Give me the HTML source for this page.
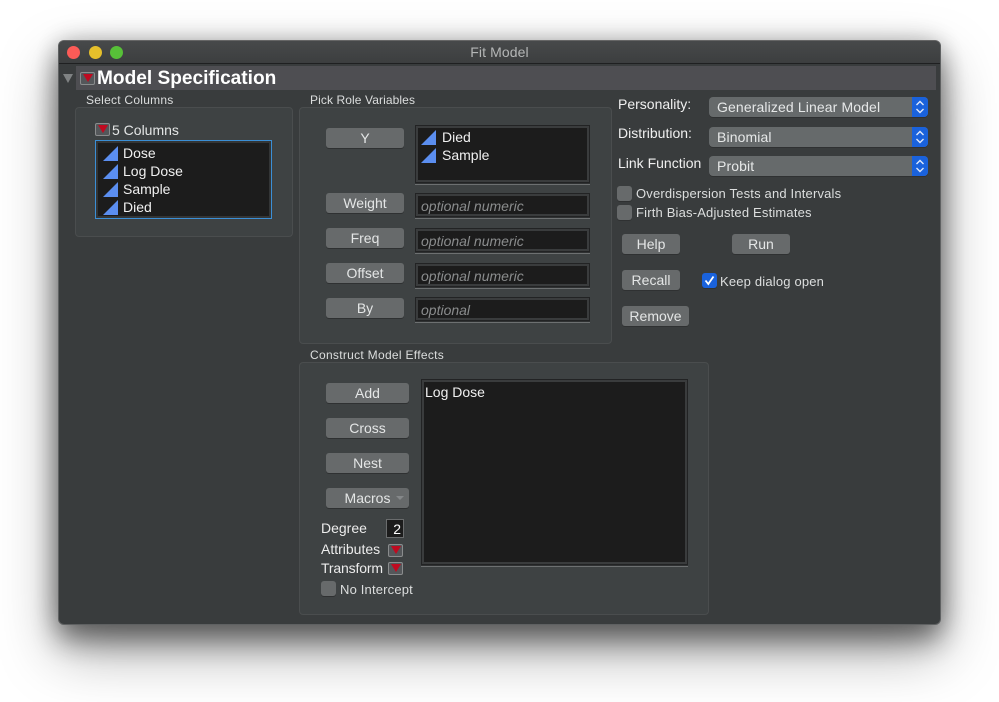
<!DOCTYPE html>
<html><head><meta charset="utf-8"><style>
*{box-sizing:border-box}
html,body{margin:0;padding:0;background:#fff}
body{width:999px;height:702px;position:relative;overflow:hidden;font-family:"Liberation Sans",sans-serif;color:#e4e6e6;font-size:14px}
#page{position:absolute;left:0;top:0;width:999px;height:702px;filter:blur(.3px)}
.a,.t,.btn,.well,.panel,.pop,.cb,.tri,.menu{position:absolute}
.t{white-space:nowrap;line-height:16px}
#win{left:58px;top:40px;width:883px;height:585px;background:#393c3d;border-radius:6px;box-shadow:0 16px 28px rgba(0,0,0,.42),0 26px 58px rgba(0,0,0,.36),0 0 26px rgba(0,0,0,.22);border:1px solid #5f6162;border-top-color:#666}
#bar{left:59px;top:41px;width:881px;height:23px;background:linear-gradient(#47494a,#3c3e3f);border-bottom:1px solid #1f2021;border-radius:5px 5px 0 0}
.dot{position:absolute;width:13px;height:13px;border-radius:50%;top:46px}
.panel{background:#3e4243;border:1px solid #4a4d4e;border-radius:4px}
.btn{background:#676a6b;border-radius:3px;height:20px;text-align:center;line-height:20px;color:#e4e6e6;box-shadow:0 1px 0 #2f3132;font-size:14px}
.well{background:#1c1c1c;border:1px solid #222324;box-shadow:inset 0 0 0 2px #3a3c3d,0 1px 0 #2f3132,0 2px 0 #6d7071}
.ph{font-style:italic;color:#8a8c8d;font-size:14px}
.pop{background:#666a6b;border-radius:4px;height:20px;width:219px;left:709px;color:#e6e8e8;padding-left:8px;line-height:21px;box-shadow:0 1px 0 #2f3132;font-size:14px;letter-spacing:.12px}
.pop i{position:absolute;right:0;top:0;width:16px;height:20px;background:#1a62dc;border-radius:0 4px 4px 0}
.pop svg{position:absolute;left:3px;top:3px}
.cb{width:15px;height:15px;background:#676a6b;border-radius:3px;box-shadow:0 1px 0 #2f3132}
.menu{width:15px;height:13px;background:#54575a;border:1px solid #8a8c8d;border-radius:2px}
.menu:after{content:"";position:absolute;left:1.5px;top:1px;border-left:5px solid transparent;border-right:5px solid transparent;border-top:8px solid #c00a20}
.tri{width:17px;height:17px}
.h{font-size:12px;color:#dcdede}
.c{font-size:13px;letter-spacing:.18px;color:#dcdede}
</style></head><body><div id="page">
<div class="a" id="win"></div>
<div class="a" id="bar"></div>
<div class="dot" style="left:67px;background:#fc5b57"></div>
<div class="dot" style="left:89px;background:#e5bf2b"></div>
<div class="dot" style="left:110px;background:#57c038"></div>
<div class="t" style="left:0;width:999px;text-align:center;top:44px;color:#b4b6b6;font-size:14px;letter-spacing:.1px">Fit Model</div>

<div class="a" style="left:76px;top:66px;width:860px;height:24px;background:#4e4e52"></div>
<div class="a" style="left:63px;top:74px;border-left:5px solid transparent;border-right:5px solid transparent;border-top:9px solid #7f8283"></div>
<div class="menu" style="left:80px;top:72px"></div>
<div class="t" style="left:97px;top:68px;font-size:19.1px;font-weight:bold;color:#fff;line-height:21px">Model Specification</div>

<div class="t h" style="left:86px;top:92px;letter-spacing:.25px">Select Columns</div>
<div class="t h" style="left:310px;top:92px;letter-spacing:.1px">Pick Role Variables</div>
<div class="t h" style="left:310px;top:347px;letter-spacing:.3px">Construct Model Effects</div>

<div class="panel" style="left:75px;top:107px;width:218px;height:130px"></div>
<div class="panel" style="left:299px;top:107px;width:313px;height:237px"></div>
<div class="panel" style="left:299px;top:362px;width:410px;height:253px"></div>

<div class="menu" style="left:95px;top:123px"></div>
<div class="t" style="left:112px;top:122px">5 Columns</div>
<div class="a" style="left:95px;top:140px;width:177px;height:79px;background:#1c1c1c;border:1px solid #3b8fd6;box-shadow:inset 0 0 0 2px #333536"></div>
<svg class="tri" style="left:102px;top:145px" viewBox="0 0 17 17"><path d="M1 16L16 1V16Z" fill="#5b8ef0"/></svg>
<svg class="tri" style="left:102px;top:163px" viewBox="0 0 17 17"><path d="M1 16L16 1V16Z" fill="#5b8ef0"/></svg>
<svg class="tri" style="left:102px;top:181px" viewBox="0 0 17 17"><path d="M1 16L16 1V16Z" fill="#5b8ef0"/></svg>
<svg class="tri" style="left:102px;top:199px" viewBox="0 0 17 17"><path d="M1 16L16 1V16Z" fill="#5b8ef0"/></svg>
<div class="t" style="left:123px;top:145px;color:#f0f0f0">Dose</div>
<div class="t" style="left:123px;top:163px;color:#f0f0f0">Log Dose</div>
<div class="t" style="left:123px;top:181px;color:#f0f0f0">Sample</div>
<div class="t" style="left:123px;top:199px;color:#f0f0f0">Died</div>

<div class="btn" style="left:326px;top:128px;width:78px">Y</div>
<div class="btn" style="left:326px;top:193px;width:78px">Weight</div>
<div class="btn" style="left:326px;top:228px;width:78px">Freq</div>
<div class="btn" style="left:326px;top:263px;width:78px">Offset</div>
<div class="btn" style="left:326px;top:298px;width:78px">By</div>

<div class="well" style="left:415px;top:125px;width:175px;height:58px"></div>
<svg class="tri" style="left:420px;top:129px" viewBox="0 0 17 17"><path d="M1 16L16 1V16Z" fill="#5b8ef0"/></svg>
<svg class="tri" style="left:420px;top:147px" viewBox="0 0 17 17"><path d="M1 16L16 1V16Z" fill="#5b8ef0"/></svg>
<div class="t" style="left:442px;top:129px;color:#f0f0f0">Died</div>
<div class="t" style="left:442px;top:147px;color:#f0f0f0">Sample</div>

<div class="well" style="left:415px;top:193px;width:175px;height:24px"></div>
<div class="well" style="left:415px;top:228px;width:175px;height:24px"></div>
<div class="well" style="left:415px;top:263px;width:175px;height:24px"></div>
<div class="well" style="left:415px;top:297px;width:175px;height:24px"></div>
<div class="t ph" style="left:421px;top:198px">optional numeric</div>
<div class="t ph" style="left:421px;top:233px">optional numeric</div>
<div class="t ph" style="left:421px;top:268px">optional numeric</div>
<div class="t ph" style="left:421px;top:302px">optional</div>

<div class="t" style="left:618px;top:96px;color:#f0f0f0">Personality:</div>
<div class="t" style="left:618px;top:125px;color:#f0f0f0">Distribution:</div>
<div class="t" style="left:618px;top:155px;color:#f0f0f0">Link Function</div>
<div class="pop" style="top:97px">Generalized Linear Model<i><svg width="10" height="14" viewBox="0 0 10 14"><path d="M1.5 5L5 1.5 8.5 5M1.5 9L5 12.5 8.5 9" fill="none" stroke="#dfe9fb" stroke-width="1.4"/></svg></i></div>
<div class="pop" style="top:127px">Binomial<i><svg width="10" height="14" viewBox="0 0 10 14"><path d="M1.5 5L5 1.5 8.5 5M1.5 9L5 12.5 8.5 9" fill="none" stroke="#dfe9fb" stroke-width="1.4"/></svg></i></div>
<div class="pop" style="top:156px">Probit<i><svg width="10" height="14" viewBox="0 0 10 14"><path d="M1.5 5L5 1.5 8.5 5M1.5 9L5 12.5 8.5 9" fill="none" stroke="#dfe9fb" stroke-width="1.4"/></svg></i></div>

<div class="cb" style="left:617px;top:186px"></div>
<div class="cb" style="left:617px;top:205px"></div>
<div class="t c" style="left:636px;top:186px">Overdispersion Tests and Intervals</div>
<div class="t c" style="left:636px;top:205px">Firth Bias-Adjusted Estimates</div>

<div class="btn" style="left:622px;top:234px;width:58px">Help</div>
<div class="btn" style="left:732px;top:234px;width:58px">Run</div>
<div class="btn" style="left:622px;top:270px;width:58px">Recall</div>
<div class="btn" style="left:622px;top:306px;width:67px">Remove</div>
<div class="cb" style="left:702px;top:273px;background:#1a62dc"><svg width="15" height="15" viewBox="0 0 15 15" style="display:block"><path d="M3.5 7.5L6.3 11 11.5 3.5" fill="none" stroke="#fff" stroke-width="1.8"/></svg></div>
<div class="t c" style="left:720px;top:274px">Keep dialog open</div>

<div class="btn" style="left:326px;top:383px;width:83px">Add</div>
<div class="btn" style="left:326px;top:418px;width:83px">Cross</div>
<div class="btn" style="left:326px;top:453px;width:83px">Nest</div>
<div class="btn" style="left:326px;top:488px;width:83px">Macros</div>
<div class="a" style="left:396px;top:496px;border-left:4px solid transparent;border-right:4px solid transparent;border-top:4px solid #85888a"></div>

<div class="well" style="left:421px;top:379px;width:267px;height:186px"></div>
<div class="t" style="left:425px;top:384px;color:#f0f0f0">Log Dose</div>

<div class="t" style="left:321px;top:520px;color:#ececec">Degree</div>
<div class="a" style="left:386px;top:519px;width:18px;height:19px;background:#1c1c1c;border:1px solid #6a6c6d;color:#fff;text-align:right;padding-right:2px;line-height:18px">2</div>
<div class="t" style="left:321px;top:541px;color:#ececec">Attributes</div>
<div class="menu" style="left:388px;top:544px"></div>
<div class="t" style="left:321px;top:560px;color:#ececec;letter-spacing:-.15px">Transform</div>
<div class="menu" style="left:388px;top:562px"></div>
<div class="cb" style="left:321px;top:581px"></div>
<div class="t c" style="left:340px;top:582px">No Intercept</div>
</div></body></html>
